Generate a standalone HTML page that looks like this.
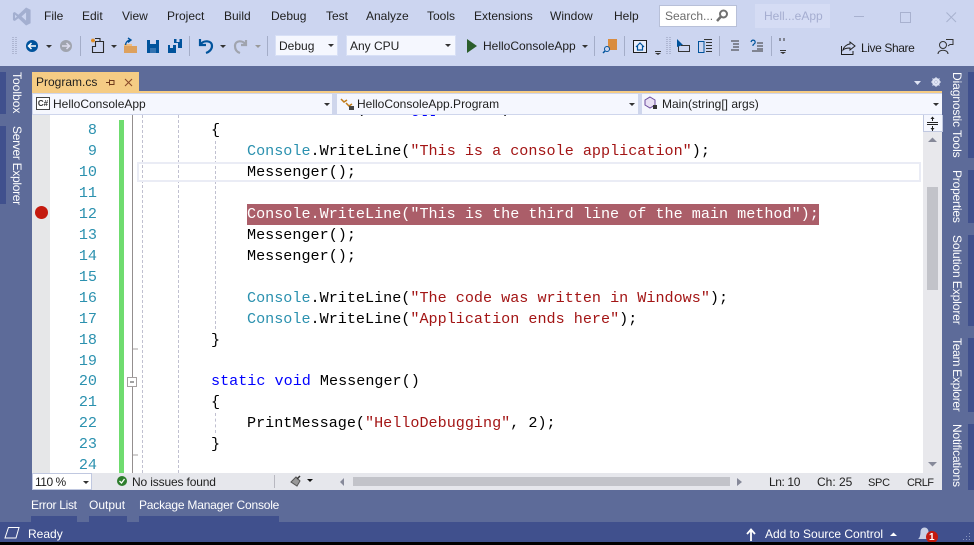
<!DOCTYPE html>
<html><head><meta charset="utf-8">
<style>
html,body{margin:0;padding:0}
body{width:974px;height:545px;overflow:hidden;position:relative;background:#5d6b99;font-family:"Liberation Sans",sans-serif;font-size:12px;color:#1e1e1e}
.a,.t,.c,.n{position:absolute;white-space:pre}
.t{line-height:14px}
.m{top:9px;color:#1e1e1e}
.v{position:absolute;writing-mode:vertical-rl;color:#fff;white-space:pre;line-height:14px}
.n{left:50px;width:47px;text-align:right;color:#2b91af;font-family:"Liberation Mono",monospace;font-size:15.13px;line-height:21px}
.c{font-family:"Liberation Mono",monospace;font-size:15.13px;line-height:21px;color:#000}
.b{color:#2b91af}.s{color:#a31515}.k{color:#0000ff}
svg{position:absolute;overflow:visible}
</style></head><body>
<div class="a" style="left:0;top:0;width:974px;height:66px;background:#ccd5f0"></div>
<svg style="left:12px;top:7px" width="20" height="19" viewBox="0 0 21 21"><path d="M15 0.5L20 3V18L15 20.5L6.5 12.5L2.5 15.5L0.5 14.5V6.500L2.500 5.500L6.500 8.500ZM15 6L10 10.500L15 15ZM2.800 8.500V12.500L5 10.500Z" fill="#a3afd0" fill-rule="evenodd"/></svg>
<div class="t m" style="left:44px">File</div><div class="t m" style="left:82px">Edit</div><div class="t m" style="left:122px">View</div><div class="t m" style="left:167px">Project</div><div class="t m" style="left:224px">Build</div><div class="t m" style="left:271px">Debug</div><div class="t m" style="left:326px">Test</div><div class="t m" style="left:366px">Analyze</div><div class="t m" style="left:427px">Tools</div><div class="t m" style="left:474px">Extensions</div><div class="t m" style="left:550px">Window</div><div class="t m" style="left:614px">Help</div>
<div class="a" style="left:659px;top:5px;width:76px;height:20px;background:#fff;border:1px solid #b8c0d8"></div>
<div class="t" style="left:665px;top:9px;color:#6d6d6d">Search...</div>
<svg style="left:715px;top:9px" width="14" height="14" viewBox="0 0 14 14"><circle cx="8.500" cy="5" r="3.500" fill="none" stroke="#717171" stroke-width="2"/><path d="M6 7.500L2 12" stroke="#717171" stroke-width="2.500"/></svg>
<div class="a" style="left:755px;top:4px;width:75px;height:24px;background:#d5dcf4"></div>
<div class="t" style="left:764px;top:9px;color:#a5add0">Hell...eApp</div>
<div class="a" style="left:854px;top:16px;width:10px;height:1px;background:#a8b1cf"></div>
<div class="a" style="left:900px;top:12px;width:9px;height:9px;border:1px solid #a8b1cf"></div>
<svg style="left:946px;top:12px" width="11" height="11"><path d="M0.500 0.500L10 10M10 0.500L0.500 10" stroke="#a8b1cf" stroke-width="1"/></svg>

<svg style="left:0;top:0" width="974" height="66" viewBox="0 0 974 66">
<path d="M13 37V54M16 37V54" stroke="#8f98b5" stroke-width="1" stroke-dasharray="1 1"/>
<circle cx="32" cy="46" r="6" fill="#00539c"/><path d="M36 46H29M31.500 43L28.500 46L31.500 49" stroke="#fff" stroke-width="1.500" fill="none"/>
<path d="M46 45H52L49 48Z" fill="#333"/>
<circle cx="66" cy="46" r="6" fill="#a0a4ae"/><path d="M62 46H69M66.500 43L69.500 46L66.500 49" stroke="#dde" stroke-width="1.500" fill="none"/>
<path d="M80.500 36V56" stroke="#a4adc8"/>
<path d="M95.500 41.500H103.500V52.500H92.500V46.500H95.500ZM100 41.500V38.500H95" fill="none" stroke="#2a2a2a" stroke-width="1.100"/>
<path d="M93 38.500V42.500M91 40.500H95M91.500 39L94.500 42M94.500 39L91.500 42" stroke="#e08a1e" stroke-width="1"/>
<path d="M111 45H117L114 48Z" fill="#333"/>
<path d="M124 46H137V53H124Z" fill="#dda15e"/><path d="M124 46V44H132V46Z" fill="#eebc82"/><path d="M125.500 45C126 41.500 128.500 40 131 40M128 38L131 40L128 42.500" stroke="#00539c" stroke-width="1.400" fill="none"/>
<path d="M147 40H159V53H147Z" fill="#00539c"/><path d="M150 40H156V44H150Z" fill="#ccd5f0"/><path d="M150 48H156V53H150Z" fill="#ccd5f0" opacity=".25"/>
<path d="M168 45H176V53H168Z" fill="#00539c"/><path d="M174 39H182V48H178V43H174Z" fill="#00539c"/><path d="M176.500 39H179.500V42H176.500ZM170 45H173V48H170Z" fill="#ccd5f0"/>
<path d="M189.500 36V56" stroke="#a4adc8"/>
<path d="M200 39V45H206M200.500 44.500C203 40 212 40 212 46C212 49.500 209 52 206 53" stroke="#00539c" stroke-width="2.200" fill="none"/>
<path d="M220 45H226L223 48Z" fill="#333"/>
<path d="M246 40V45H241M245.500 44.500C243 40 235 40 235 46C235 49.500 237 52 240 53" stroke="#a0a4ae" stroke-width="2.200" fill="none"/>
<path d="M255 45H261L258 48Z" fill="#999"/>
<path d="M267.500 36V56" stroke="#a4adc8"/>
<path d="M467 39L477 46L467 53Z" fill="#2b5d2b"/>
<path d="M582 45H588L585 48Z" fill="#333"/>
<path d="M594.500 36V56" stroke="#a4adc8"/>
<path d="M608 39H617V50H608Z" fill="#d98c3f"/><circle cx="607" cy="49" r="2.500" fill="#ccd5f0" stroke="#00539c"/><path d="M605 51L603 53" stroke="#00539c" stroke-width="1.500"/>
<path d="M624.500 36V56" stroke="#a4adc8"/>
<path d="M633.500 40.500H646.500V52.500H633.500Z" fill="#e8edfb" stroke="#1e1e1e"/><path d="M636 47L640 43L644 47M637.500 46V50H642.500V46" stroke="#00539c" stroke-width="1.200" fill="none"/>
<path d="M655 51H661V52H655ZM655 53H661L658 55Z" fill="#333"/>
<path d="M667 37V54M670 37V54" stroke="#8f98b5" stroke-dasharray="1 1"/>
<path d="M677 39L677 47L683 45Z" fill="#00539c"/><path d="M678.500 46.500V51.500H689.500V45.500H681" stroke="#333" fill="none"/>
<path d="M698.500 41.500H704V52.500H698.500Z" stroke="#00539c" fill="none"/><path d="M704 39.500H712M706 42.500H712M706 45.500H712M706 48.500H712M706 51.500H712" stroke="#333" fill="none"/>
<path d="M719.500 36V56" stroke="#a4adc8"/>
<path d="M731 41H739M733 44H739M733 47H739M731 50H739" stroke="#333"/>
<path d="M751 42C752 39 756 40 755 43L753 45V46" stroke="#00539c" fill="none" stroke-width="1.200"/><path d="M757 43H763M757 46H763M757 49H763M752 51H763" stroke="#333"/>
<path d="M771.500 36V56" stroke="#a4adc8"/>
<path d="M780 38V41M784 38V41" stroke="#333"/><path d="M780 50H786V51H780ZM780 52H786L783 54Z" fill="#333"/>
<path d="M841.500 46V54.500H853V51M843 50C844 46 848 44 850 44V42L855 46L850 50V48C848 48 845 48 843 50Z" fill="none" stroke="#1e1e1e"/>
<circle cx="943" cy="45" r="3.500" fill="none" stroke="#333"/><path d="M938 54C938 49 948 49 948 54M946 39.500H953V44.500H950L948 46" fill="none" stroke="#333"/>
</svg>

<div class="a" style="left:275px;top:35px;width:63px;height:21px;background:#f5f7fe;border:1px solid #d8e0f6;box-sizing:border-box"></div>
<div class="t" style="left:279px;top:39px">Debug</div>
<svg style="left:327px;top:44px" width="8" height="5"><path d="M1 0H7L4 3Z" fill="#333"/></svg>
<div class="a" style="left:346px;top:35px;width:110px;height:21px;background:#f5f7fe;border:1px solid #d8e0f6;box-sizing:border-box"></div>
<div class="t" style="left:350px;top:39px">Any CPU</div>
<svg style="left:444px;top:44px" width="8" height="5"><path d="M1 0H7L4 3Z" fill="#333"/></svg>
<div class="t" style="left:483px;top:39px">HelloConsoleApp</div>
<div class="t" style="left:861px;top:41px;letter-spacing:-.4px">Live Share</div>

<!-- side columns -->
<div class="a" style="left:0;top:72px;width:6px;height:42px;background:#40508d"></div>
<div class="a" style="left:0;top:126px;width:6px;height:78px;background:#40508d"></div>
<div class="v" style="left:10px;top:72px">Toolbox</div>
<div class="v" style="left:10px;top:126px;letter-spacing:-.3px">Server Explorer</div>
<div class="a" style="left:968px;top:72px;width:6px;height:86px;background:#40508d"></div>
<div class="a" style="left:968px;top:170px;width:6px;height:53px;background:#40508d"></div>
<div class="a" style="left:968px;top:235px;width:6px;height:91px;background:#40508d"></div>
<div class="a" style="left:968px;top:338px;width:6px;height:74px;background:#40508d"></div>
<div class="a" style="left:968px;top:424px;width:6px;height:66px;background:#40508d"></div>
<div class="v" style="left:950px;top:72px;letter-spacing:-.1px">Diagnostic Tools</div>
<div class="v" style="left:950px;top:170px;letter-spacing:-.2px">Properties</div>
<div class="v" style="left:950px;top:235px;letter-spacing:-.1px">Solution Explorer</div>
<div class="v" style="left:950px;top:338px;letter-spacing:-.3px">Team Explorer</div>
<div class="v" style="left:950px;top:424px;letter-spacing:-.2px">Notifications</div>

<!-- tab -->
<div class="a" style="left:32px;top:72px;width:107px;height:19px;background:#f5cc84"></div>
<div class="t" style="left:36px;top:75px">Program.cs</div>
<svg style="left:105px;top:78px" width="34" height="10"><path d="M1 4.500H4M4.500 1.500V7.500M4.500 2.500H9V6.500H4.500" stroke="#6e3a1a" fill="none"/><path d="M20 1L27 8M27 1L20 8" stroke="#8a4a2a" stroke-width="1.100"/></svg>
<svg style="left:914px;top:79px" width="30" height="12"><path d="M0 2H7L3.500 6Z" fill="#dfe4f4"/><circle cx="22" cy="3" r="3" fill="none" stroke="#dfe4f4" stroke-width="2"/><path d="M22-2V8M17 3H27M18.500-.5L25.500 6.500M25.500-.5L18.500 6.500" stroke="#dfe4f4"/></svg>
<div class="a" style="left:32px;top:91px;width:910px;height:2px;background:#f5cc84"></div>

<!-- nav bar -->
<div class="a" style="left:32px;top:93px;width:910px;height:22px;background:#cfd6ec"></div>
<div class="a" style="left:33px;top:94px;width:299px;height:20px;background:#f5f7fe"></div>
<div class="a" style="left:337px;top:94px;width:301px;height:20px;background:#f5f7fe"></div>
<div class="a" style="left:642px;top:94px;width:300px;height:20px;background:#f5f7fe"></div>
<div class="a" style="left:36px;top:97px;width:12px;height:11px;border:1px solid #444;background:#fff;font:bold 8px/11px 'Liberation Sans',sans-serif;text-align:center;color:#333">C#</div>
<div class="t" style="left:53px;top:97px">HelloConsoleApp</div>
<div class="t" style="left:357px;top:97px">HelloConsoleApp.Program</div>
<div class="t" style="left:662px;top:97px">Main(string[] args)</div>
<svg style="left:0;top:93px" width="974" height="22"><path d="M324 10H330L327 13ZM629 10H635L632 13ZM933 10H939L936 13Z" fill="#333"/><path d="M341 6L344 9L347 7M346 10L349 13L352 11" stroke="#c27d1a" fill="none" stroke-width="1.500"/><path d="M349 13H354V17H349Z" fill="#444"/><path d="M650 4L655 7V12L650 15L645 12V7Z" fill="#e8e0f4" stroke="#6a4a9c"/><path d="M653 12H657V16H653Z" fill="#333"/></svg>

<!-- editor -->
<div class="a" style="left:32px;top:115px;width:910px;height:358px;background:#fff;overflow:hidden"></div>
<div class="a" style="left:32px;top:115px;width:18px;height:358px;background:#e6e7e8"></div>
<div class="a" style="left:119px;top:120px;width:5px;height:353px;background:#6fdc6f"></div>
<div class="a" style="left:132px;top:115px;width:1px;height:358px;background:#948f8f"></div>
<div class="a" style="left:142px;top:115px;width:0;height:358px;border-left:1px dashed #c0c0d0"></div>
<div class="a" style="left:178px;top:115px;width:0;height:358px;border-left:1px dashed #c0c0d0"></div>
<div class="a" style="left:215px;top:141px;width:0;height:188px;border-left:1px dashed #c0c0d0"></div>
<div class="a" style="left:215px;top:413px;width:0;height:20px;border-left:1px dashed #c0c0d0"></div>
<div class="a" style="left:137px;top:162px;width:780px;height:16px;border:2px solid #eaecf5"></div>
<div class="a" style="left:247px;top:204px;width:572px;height:21px;background:#ab5e69"></div>
<svg style="left:35px;top:206px" width="14" height="14"><circle cx="6.500" cy="6.500" r="6.500" fill="#c41a0e"/></svg>
<svg style="left:127px;top:340px" width="12" height="60"><path d="M6 9H11" stroke="#a5a0a0"/><rect x=".5" y="37.500" width="9" height="9" fill="#fff" stroke="#a5a0a0"/><path d="M3 42H7" stroke="#444"/></svg>
<svg style="left:127px;top:453px" width="12" height="5"><path d="M6 2H11" stroke="#a5a0a0"/></svg>

<div class="a" style="left:211px;top:115px;width:400px;height:3px;overflow:hidden"><div class="c" style="left:0;top:-16px"><span class="k">static</span> <span class="k">void</span> Main(<span class="k">string</span><span class="k">[]</span> <span style="color:#999">....</span><span style="color:#8a9">0</span> )</div></div>
<div class="n" style="top:120px">8</div>
<div class="n" style="top:141px">9</div>
<div class="n" style="top:162px">10</div>
<div class="n" style="top:183px">11</div>
<div class="n" style="top:204px">12</div>
<div class="n" style="top:225px">13</div>
<div class="n" style="top:246px">14</div>
<div class="n" style="top:267px">15</div>
<div class="n" style="top:288px">16</div>
<div class="n" style="top:309px">17</div>
<div class="n" style="top:330px">18</div>
<div class="n" style="top:351px">19</div>
<div class="n" style="top:371px">20</div>
<div class="n" style="top:392px">21</div>
<div class="n" style="top:413px">22</div>
<div class="n" style="top:434px">23</div>
<div class="n" style="top:455px;height:18px;overflow:hidden">24</div>

<div class="c" style="left:211px;top:120px">{</div>
<div class="c" style="left:247px;top:141px"><span class="b">Console</span>.WriteLine(<span class="s">"This is a console application"</span>);</div>
<div class="c" style="left:247px;top:162px">Messenger();</div>
<div class="c" style="left:247px;top:204px;color:#fff">Console.WriteLine("This is the third line of the main method");</div>
<div class="c" style="left:247px;top:225px">Messenger();</div>
<div class="c" style="left:247px;top:246px">Messenger();</div>
<div class="c" style="left:247px;top:288px"><span class="b">Console</span>.WriteLine(<span class="s">"The code was written in Windows"</span>);</div>
<div class="c" style="left:247px;top:309px"><span class="b">Console</span>.WriteLine(<span class="s">"Application ends here"</span>);</div>
<div class="c" style="left:211px;top:330px">}</div>
<div class="c" style="left:211px;top:371px"><span class="k">static</span> <span class="k">void</span> Messenger()</div>
<div class="c" style="left:211px;top:392px">{</div>
<div class="c" style="left:247px;top:413px">PrintMessage(<span class="s">"HelloDebugging"</span>, 2);</div>
<div class="c" style="left:211px;top:434px">}</div>

<!-- vertical scrollbar -->
<div class="a" style="left:923px;top:115px;width:19px;height:358px;background:#e8e8ec"></div>
<div class="a" style="left:923px;top:115px;width:18px;height:16px;background:#f5f7fe;border:1px solid #c0c8e0;border-top:0;box-sizing:content-box"></div>
<svg style="left:926px;top:116px" width="14" height="16"><path d="M1 6.500H12M1 8.500H12M6.500 1V5M6.500 10V15" stroke="#222"/><path d="M4.500 3L6.500 0.500L8.500 3ZM4.500 12L6.500 14.500L8.500 12Z" fill="#222"/></svg>
<svg style="left:927px;top:137px" width="12" height="7"><path d="M1 5H10L5.500 0.500Z" fill="#868999"/></svg>
<div class="a" style="left:927px;top:187px;width:11px;height:103px;background:#c2c3c9"></div>
<svg style="left:927px;top:461px" width="12" height="7"><path d="M1 1H10L5.500 5.500Z" fill="#868999"/></svg>

<!-- bottom editor bar -->
<div class="a" style="left:32px;top:473px;width:910px;height:17px;background:#e6e7ec"></div>
<div class="a" style="left:32px;top:473px;width:60px;height:17px;background:#fff;border:1px solid #c0c8e0;box-sizing:border-box"></div>
<div class="t" style="left:35px;top:475px;letter-spacing:-.5px">110 %</div>
<svg style="left:82px;top:480px" width="8" height="5"><path d="M1 1H7L4 4Z" fill="#333"/></svg>
<svg style="left:116px;top:475px" width="13" height="13"><circle cx="6" cy="6" r="5" fill="#2d7d2d"/><path d="M3.500 6L5.500 8L8.500 4" stroke="#fff" stroke-width="1.300" fill="none"/></svg>
<div class="t" style="left:132px;top:475px;letter-spacing:-.15px">No issues found</div>
<div class="a" style="left:274px;top:475px;width:1px;height:13px;background:#b8b8c0"></div>
<svg style="left:290px;top:476px" width="26" height="12"><path d="M1 6L6 1L10 5L7 10Z" fill="#999" stroke="#555"/><path d="M7 3L10 0" stroke="#333" stroke-width="1.500"/><path d="M17 3H23L20 6Z" fill="#111"/></svg>
<svg style="left:338px;top:476px" width="10" height="12"><path d="M6 2V10L2 6Z" fill="#868999"/></svg>
<div class="a" style="left:353px;top:477px;width:377px;height:9px;background:#c2c3c9"></div>
<svg style="left:736px;top:476px" width="10" height="12"><path d="M1 2V10L6 6Z" fill="#868999"/></svg>
<div class="t" style="left:769px;top:475px;letter-spacing:-.4px">Ln: 10</div>
<div class="t" style="left:817px;top:475px">Ch: 25</div>
<div class="t" style="left:868px;top:476px;font-size:11px;letter-spacing:-.3px">SPC</div>
<div class="t" style="left:907px;top:476px;font-size:11px;letter-spacing:-.6px">CRLF</div>

<!-- bottom tabs -->
<div class="t" style="left:31px;top:498px;color:#fff;letter-spacing:-.3px">Error List</div>
<div class="t" style="left:89px;top:498px;color:#fff">Output</div>
<div class="t" style="left:139px;top:498px;color:#fff;letter-spacing:-.2px">Package Manager Console</div>
<div class="a" style="left:31px;top:516px;width:46px;height:6px;background:#40508d"></div>
<div class="a" style="left:89px;top:516px;width:38px;height:6px;background:#40508d"></div>
<div class="a" style="left:139px;top:516px;width:140px;height:6px;background:#40508d"></div>

<!-- status bar -->
<div class="a" style="left:0;top:522px;width:974px;height:20px;background:#40508d"></div>
<svg style="left:4px;top:527px" width="16" height="12"><path d="M4.500 0.500H15L12 11H1Z" fill="none" stroke="#fff"/></svg>
<div class="t" style="left:28px;top:527px;color:#fff">Ready</div>
<svg style="left:746px;top:528px" width="11" height="13"><path d="M5 13V2M1 6L5 1.500L9 6" stroke="#fff" stroke-width="1.800" fill="none"/></svg>
<div class="t" style="left:765px;top:527px;color:#fff">Add to Source Control</div>
<svg style="left:889px;top:532px" width="9" height="5"><path d="M1 4H8L4.500 0.500Z" fill="#fff"/></svg>
<svg style="left:917px;top:525px" width="22" height="18"><path d="M1 14C3 13 3.500 9 3.500 7C3.500 4 5.500 2.500 7.500 2.500C9.500 2.500 11.500 4 11.500 7C11.500 9 12 13 14 14Z" fill="#c8cfe4"/><circle cx="15" cy="12" r="6" fill="#c41a0e"/></svg>
<div class="t" style="left:929px;top:532px;color:#fff;font-size:10px;line-height:11px;font-weight:bold">1</div>
<svg style="left:962px;top:532px" width="10" height="9"><path d="M7 1h1v1H7zM4 4h1v1H4zM7 4h1v1H7zM1 7h1v1H1zM4 7h1v1H4zM7 7h1v1H7z" fill="#8a96bd"/></svg>
<div class="a" style="left:0;top:542px;width:974px;height:3px;background:#000"></div>
</body></html>
